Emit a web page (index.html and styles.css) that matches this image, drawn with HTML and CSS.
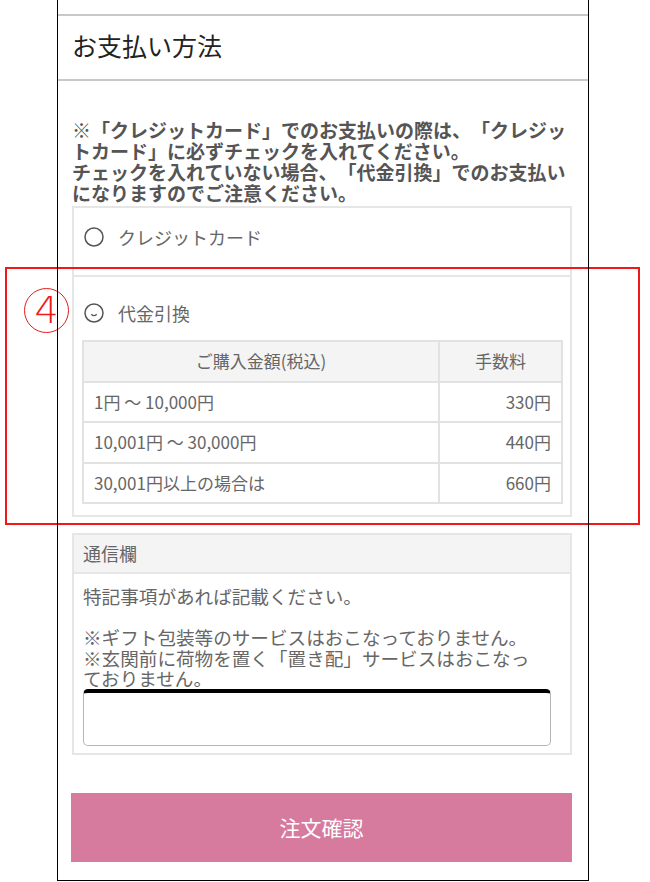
FILE: index.html
```html
<!DOCTYPE html>
<html lang="ja">
<head>
  <meta charset="UTF-8" />
  <meta name="viewport" content="width=device-width, initial-scale=1.0" />
  <title>お支払い方法</title>
  <link rel="stylesheet" href="styles.css">
</head>
<body>
  <div class="frame">
    <div class="top-strip"></div>
    <h2 class="section-title">お支払い方法</h2>

    <div class="section-body">
      <p class="notice">※「クレジットカード」でのお支払いの際は、「クレジットカード」に必ずチェックを入れてください。<br>チェックを入れていない場合、「代金引換」でのお支払いになりますのでご注意ください。</p>

      <div class="pay-box">
        <label class="pay-opt">
          <svg class="radio" width="20" height="20" viewBox="0 0 20 20"><circle cx="10" cy="10" r="9" fill="none" stroke="#555" stroke-width="1.5"/></svg>
          <span>クレジットカード</span>
        </label>

        <div class="pay-opt cod">
          <div class="opt-row">
            <svg class="radio" width="20" height="20" viewBox="0 0 20 20"><circle cx="10" cy="10" r="9" fill="none" stroke="#555" stroke-width="1.5"/><path d="M7.3 11.2 Q10 14.2 12.7 11.2" fill="none" stroke="#555" stroke-width="1.3"/></svg>
            <span>代金引換</span>
          </div>
          <table class="fee-table">
            <tr>
              <th>ご購入金額(税込)</th>
              <th class="fee-col">手数料</th>
            </tr>
            <tr>
              <td>1円 ～ 10,000円</td>
              <td class="num">330円</td>
            </tr>
            <tr>
              <td>10,001円 ～ 30,000円</td>
              <td class="num">440円</td>
            </tr>
            <tr>
              <td>30,001円以上の場合は</td>
              <td class="num">660円</td>
            </tr>
          </table>
        </div>
      </div>

      <div class="memo-box">
        <div class="memo-head">通信欄</div>
        <div class="memo-body">
          <p class="memo-text">特記事項があれば記載ください。<br><br>※ギフト包装等のサービスはおこなっておりません。<br>※玄関前に荷物を置く「置き配」サービスはおこなっておりません。</p>
          <textarea class="memo-input"></textarea>
        </div>
      </div>

      <button class="confirm-btn">注文確認</button>
    </div>
  </div>

  <!-- annotation -->
  <div class="mark-box"></div>
  <div class="mark-num">4</div>
</body>
</html>
```

FILE: styles.css
```css
body {
  margin: 0;
  background: #fff;
  font-family: "Noto Sans CJK JP", "Noto Sans", sans-serif;
  color: #666;
  text-spacing-trim: space-all;
}
.frame {
  position: relative;
  margin-left: 57px;
  width: 530px;
  height: 880px;
  padding: 0 1px 1px;
}
.frame::after {
  content: '';
  position: absolute;
  top: 0;
  left: 0;
  right: 0;
  bottom: 0;
  border: 1px solid #000;
  border-top: 0;
  z-index: 2;
  pointer-events: none;
}
.top-strip {
  height: 14px;
  border-bottom: 2px solid #c9c9c9;
}
.section-title {
  margin: 0;
  height: 63px;
  line-height: 59px;
  padding-left: 14px;
  font-size: 25px;
  font-weight: normal;
  color: #222;
  border-bottom: 2px solid #c9c9c9;
}
.section-body {
  padding: 38px 16px 0 14px;
}
.notice {
  margin: 0 0 3px;
  font-size: 19px;
  line-height: 21px;
  font-weight: bold;
  color: #555;
}
.pay-box {
  border: 2px solid #e6e6e6;
}
.pay-opt {
  display: flex;
  align-items: center;
  gap: 14px;
  padding: 18px 8px 27px 10px;
  font-size: 18px;
  line-height: 22px;
  color: #666;
}
.pay-opt.cod {
  display: block;
  border-top: 2px solid #e6e6e6;
  padding: 25px 7px 11px 8px;
}
.opt-row {
  display: flex;
  align-items: center;
  gap: 14px;
  padding-left: 2px;
}
.radio {
  flex: none;
}
.fee-table {
  width: 100%;
  margin-top: 16px;
  border-collapse: collapse;
  border: 2px solid #e2e2e2;
  font-size: 17px;
  color: #666;
}
.fee-table th,
.fee-table td {
  border: 2px solid #e2e2e2;
  height: 38.5px;
  padding: 0 10px;
  font-weight: normal;
}
.fee-table th {
  background: #f4f4f4;
  text-align: center;
}
.fee-table td {
  text-align: left;
}
.fee-table .fee-col {
  width: 101px;
}
.fee-table .num {
  text-align: right;
}
.memo-box {
  margin-top: 16px;
  border: 2px solid #e6e6e6;
}
.memo-head {
  height: 37px;
  line-height: 37px;
  padding-left: 9px;
  background: #f4f4f4;
  border-bottom: 2px solid #e6e6e6;
  font-size: 18px;
  color: #666;
}
.memo-body {
  padding: 12px 26px 7px 9px;
}
.memo-text {
  margin: 0;
  font-size: 18.6px;
  line-height: 20.6px;
  color: #666;
}
.memo-input {
  display: block;
  box-sizing: border-box;
  width: 468px;
  height: 57px;
  margin-top: 0;
  border: 1px solid #b5b5b5;
  border-top: 4px solid #000;
  border-radius: 5px;
  resize: none;
  background: #fff;
}
.confirm-btn {
  display: block;
  width: 501px;
  height: 69px;
  margin: 38px 0 0 -1px;
  border: none;
  background: #d67a9e;
  color: #fff;
  font-family: "Noto Sans CJK JP", sans-serif;
  font-size: 21px;
  cursor: pointer;
}
.mark-box {
  position: absolute;
  left: 5px;
  top: 267px;
  width: 631px;
  height: 254px;
  border: 2px solid #f01818;
  z-index: 1;
}
.mark-num {
  position: absolute;
  left: 24px;
  top: 288px;
  width: 43px;
  height: 43px;
  border: 1.5px solid #f01818;
  border-radius: 50%;
  text-align: center;
  line-height: 43px;
  font-family: "DejaVu Sans", sans-serif;
  font-size: 38px;
  font-weight: 200;
  color: #f01818;
  z-index: 1;
}
```
